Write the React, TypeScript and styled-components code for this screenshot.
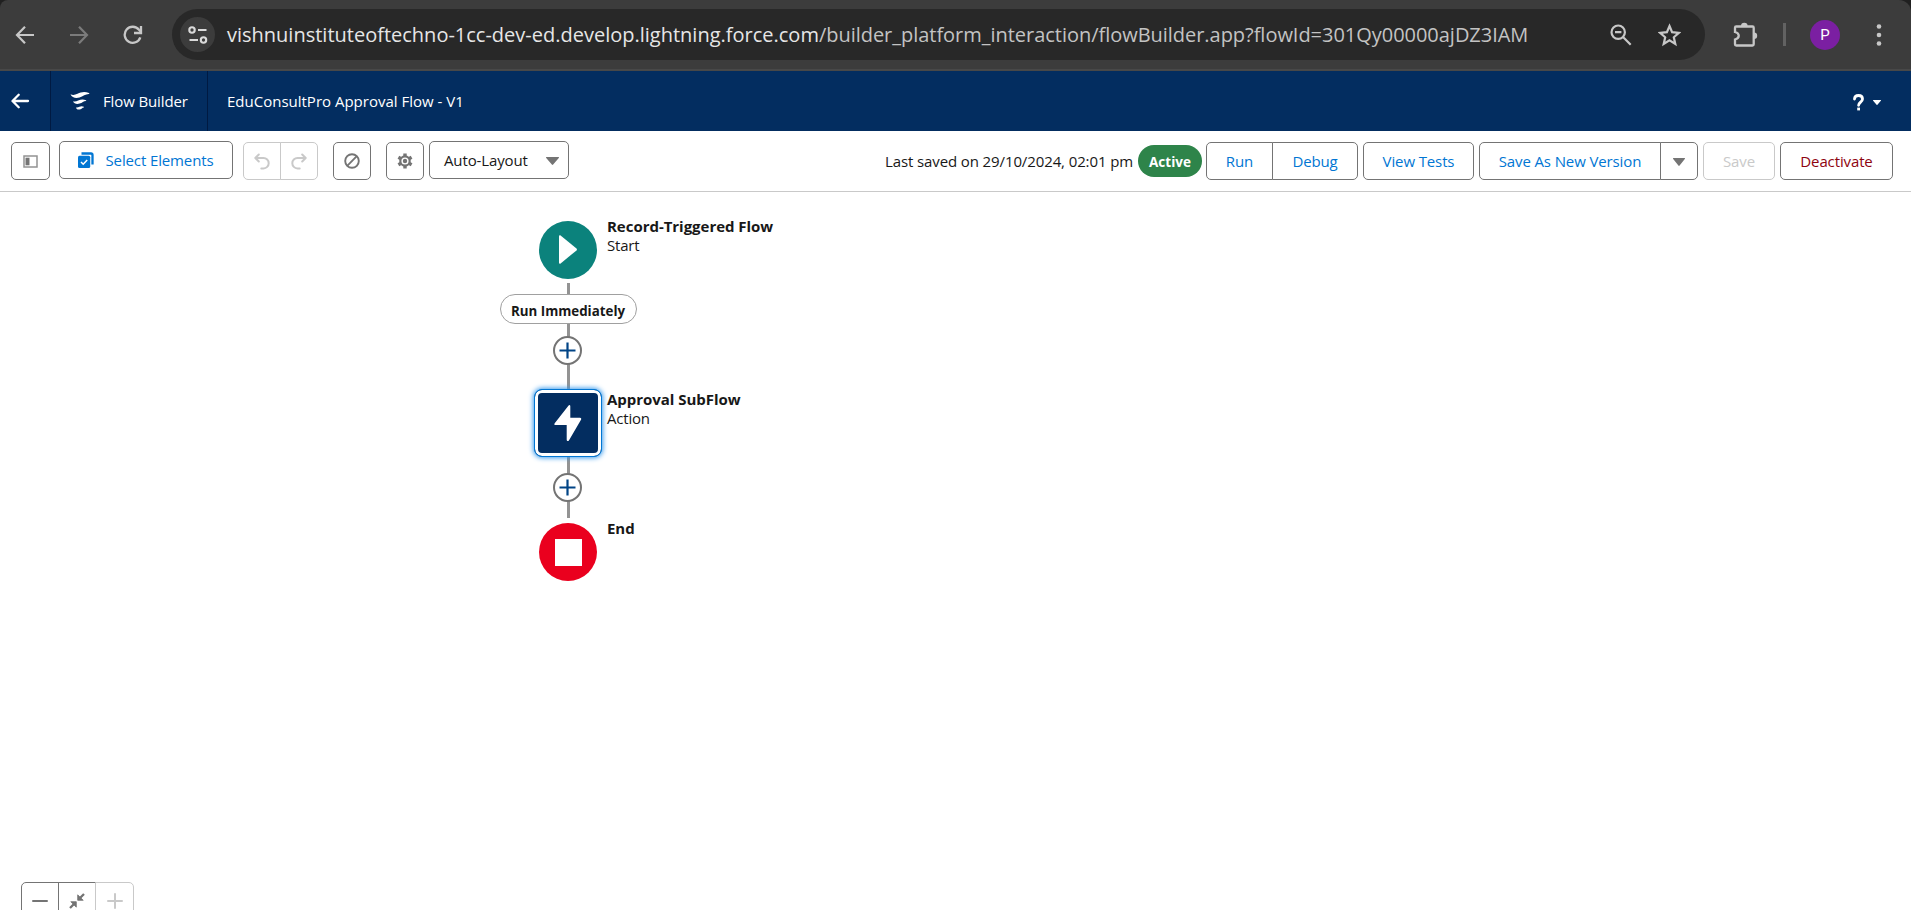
import React from 'react';
import styled, { createGlobalStyle, css } from 'styled-components';

const GlobalStyle = createGlobalStyle`
  * { box-sizing: border-box; }
  html, body { margin: 0; padding: 0; }
  body {
    background: #fff;
    color: #181818;
    font-family: 'Open Sans', 'Noto Sans', sans-serif;
    font-size: 15px;
    letter-spacing: -0.12px;
    overflow: hidden;
  }
  svg { display: block; flex: none; }
`;

const Page = styled.div`
  display: flex;
  flex-direction: column;
  width: 100%;
  height: 100vh;
  overflow: hidden;
`;

/* ---------- Browser bar ---------- */

const BrowserFrame = styled.div`
  flex: none;
  background: #202020;
`;

const BrowserBar = styled.div`
  display: flex;
  align-items: center;
  height: 71px;
  padding: 0 20px 0 15px;
  background: #3c3c3c;
  border-bottom: 2px solid #484848;
  border-radius: 8px 12px 0 0;
  color: #c7c7c7;
`;

const NavIcons = styled.div`
  display: flex;
  gap: 34px;
  width: 157px;
`;

const AddressBar = styled.div`
  display: flex;
  align-items: center;
  width: 1533px;
  height: 51px;
  padding: 0 24px 0 8px;
  border-radius: 26px;
  background: #282828;
`;

const SiteInfo = styled.div`
  display: grid;
  place-items: center;
  width: 35px;
  height: 35px;
  margin-right: 12px;
  border-radius: 50%;
  background: #3c3c3c;
`;

const Url = styled.div`
  flex: 1;
  font-size: 20px;
  letter-spacing: -0.03px;
  line-height: 28px;
  white-space: nowrap;
  color: #c3c3c3;
`;

const Host = styled.span`
  letter-spacing: 0;
  color: #e6e6e6;
`;

const AddressActions = styled.div`
  display: flex;
  align-items: center;
  gap: 26px;
`;

const Extras = styled.div`
  display: flex;
  flex: 1;
  align-items: center;
  padding-left: 28px;
`;

const BrowserDivider = styled.i`
  width: 3px;
  height: 23px;
  margin: 0 24px 0 25px;
  background: #626262;
`;

const Avatar = styled.div`
  display: grid;
  place-items: center;
  width: 30px;
  height: 30px;
  margin-right: 36px;
  border-radius: 50%;
  background: #7b1fa2;
  color: #fff;
  font: 400 15px Roboto, sans-serif;
`;

/* ---------- App header ---------- */

const Header = styled.header`
  display: flex;
  flex: none;
  height: 60px;
  background: #032d60;
  color: #fff;
`;

const HeaderCell = styled.div<{ $width: number; $pad: number }>`
  display: flex;
  align-items: center;
  width: ${(p) => p.$width}px;
  padding: 0 0 0 ${(p) => p.$pad}px;
  border-right: 1px solid #001a42;
`;

const AppName = styled.span`
  margin-left: 13px;
`;

const FlowTitle = styled.h1`
  flex: 1;
  margin: 0;
  padding-left: 19px;
  font-size: 15px;
  font-weight: 400;
  letter-spacing: 0;
  line-height: 61px;
`;

const HelpMenu = styled.div`
  display: flex;
  align-items: center;
  gap: 9px;
  padding: 3px 30px 0 0;
`;

/* ---------- Toolbar ---------- */

const Toolbar = styled.div`
  display: flex;
  flex: none;
  align-items: flex-start;
  justify-content: space-between;
  height: 61px;
  padding: 10px 18px 0 11px;
  border-bottom: 1px solid #c9c9c9;
`;

const ToolbarSide = styled.div`
  display: flex;
`;

const Status = styled.span`
  margin-right: 5px;
  line-height: 40px;
  letter-spacing: -0.11px;
`;

type Tone = 'brand' | 'neutral' | 'disabled' | 'danger';

const tones: Record<Tone, string> = {
  brand: '#0176d3',
  neutral: '#181818',
  disabled: '#c9c9c9',
  danger: '#8e030f',
};

const Button = styled.button<{ $width: number; $tone?: Tone; $gap?: number; $raised?: boolean; $side?: 'left' | 'right' }>`
  display: flex;
  flex: none;
  align-items: center;
  justify-content: center;
  width: ${(p) => p.$width}px;
  height: 38px;
  margin: ${(p) => (p.$raised ? 0 : 1)}px 0 0 ${(p) => p.$gap ?? 0}px;
  padding: 0;
  border: 1px solid ${(p) => (p.$tone === 'disabled' ? '#c9c9c9' : '#747474')};
  border-radius: 5px;
  background: #fff;
  color: ${(p) => tones[p.$tone ?? 'brand']};
  font: inherit;
  letter-spacing: inherit;
  line-height: 36px;
  ${(p) => p.$side === 'left' && css`border-radius: 5px 0 0 5px;`}
  ${(p) => p.$side === 'right' && css`margin-left: -1px; border-radius: 0 5px 5px 0;`}
`;

const ButtonLabel = styled.span`
  margin-left: 11px;
`;

const MenuButton = styled(Button)`
  justify-content: space-between;
  padding: 0 9px 0 14px;
`;

const MenuCaret = styled.span`
  padding-top: 2px;
`;

const ActiveBadge = styled.span`
  width: 64px;
  height: 32px;
  margin: 4px 4px 0 0;
  border-radius: 16px;
  background: #2e844a;
  color: #fff;
  font-size: 13.5px;
  font-weight: 700;
  letter-spacing: 0;
  line-height: 34px;
  text-align: center;
`;

/* ---------- Canvas ---------- */

const Canvas = styled.main`
  position: relative;
  flex: 1;
  overflow: hidden;
`;

const Connector = styled.i<{ $y: number; $h: number }>`
  position: absolute;
  left: 567px;
  top: ${(p) => p.$y}px;
  width: 3px;
  height: ${(p) => p.$h}px;
  background: #939393;
`;

const Node = styled.div<{ $y: number }>`
  position: absolute;
  left: 533px;
  top: ${(p) => p.$y}px;
  display: flex;
  align-items: flex-start;
`;

const IconSlot = styled.div`
  display: flex;
  justify-content: center;
  width: 70px;
`;

const RoundIcon = styled.div<{ $color: string }>`
  display: grid;
  place-items: center;
  width: 58px;
  height: 58px;
  border-radius: 50%;
  background: ${(p) => p.$color};
`;

const ActionIcon = styled.div`
  display: grid;
  place-items: center;
  width: 68px;
  height: 68px;
  border: 1px solid #0176d3;
  border-radius: 8px;
  background: #032d60;
  box-shadow: inset 0 0 0 3px #fff, 0 0 5px 1px #3b9bec;
`;

const StopSquare = styled.i`
  width: 27px;
  height: 27px;
  background: #fff;
`;

const NodeText = styled.div<{ $top: number }>`
  margin: ${(p) => p.$top}px 0 0 4px;
  line-height: 19px;
  white-space: nowrap;
`;

const NodeTitle = styled.div`
  font-weight: 700;
  letter-spacing: -0.03px;
`;

const NodeKind = styled.div`
  letter-spacing: -0.2px;
`;

const PathLabel = styled.div`
  position: absolute;
  left: 499.5px;
  top: 102px;
  width: 137px;
  height: 30px;
  border: 1px solid #a0a0a0;
  border-radius: 15px;
  background: #fff;
  font-size: 13.33px;
  font-weight: 700;
  letter-spacing: 0;
  line-height: 33px;
  text-align: center;
`;

const AddButton = styled.button<{ $y: number }>`
  position: absolute;
  left: 553px;
  top: ${(p) => p.$y}px;
  display: grid;
  place-items: center;
  width: 29px;
  height: 29px;
  padding: 0;
  border: 2px solid #747474;
  border-radius: 50%;
  background: #fff;
`;

const ZoomControls = styled.div`
  position: absolute;
  left: 21px;
  top: 690px;
  display: flex;
`;

const ZoomButton = styled(Button)`
  margin-top: 0;
  border-radius: 0;
  &:first-child { border-top-left-radius: 5px; }
  &:not(:first-child) { margin-left: -1px; }
  &:last-child { border-top-right-radius: 5px; }
`;

/* ---------- Icons ---------- */

const Caret = ({ w, h, fill = '#747474' }: { w: number; h: number; fill?: string }) => (
  <svg width={w} height={h} viewBox="0 0 12 8" preserveAspectRatio="none" fill={fill}>
    <path d="M.6 0h10.8c.6 0 .8.5.4 1L6.6 7.6a.8.8 0 0 1-1.2 0L.2 1C-.2.500 0 0 .6 0Z" />
  </svg>
);

const Arrow = ({ color, flip }: { color: string; flip?: boolean }) => (
  <svg width="20" height="20" viewBox="0 0 20 20" fill="none" stroke={color} strokeWidth="2.2">
    <path d={flip ? 'M1 10h16.500M10 1.800l8 8.200-8 8.200' : 'M19 10H2.500M10 1.800L2 10l8 8.200'} />
  </svg>
);

const ReloadIcon = () => (
  <svg width="20" height="20" viewBox="0 0 20 20" fill="none" stroke="#c7c7c7" strokeWidth="2.300">
    <path d="M17.300 12.300A8 8 0 1 1 16 4.800L18 7" />
    <path d="M18 1v7h-7" />
  </svg>
);

const TuneIcon = () => (
  <svg width="20" height="18" viewBox="0 0 20 18" fill="none" stroke="#dadada" strokeWidth="2.100">
    <circle cx="4" cy="4" r="2.700" />
    <path d="M10 4h8.500M1.500 14H10" />
    <circle cx="15.500" cy="14" r="2.700" />
  </svg>
);

const ZoomOutIcon = () => (
  <svg width="22" height="22" viewBox="0 0 22 22" fill="none" stroke="#c7c7c7" strokeWidth="2.200">
    <circle cx="8.200" cy="8.200" r="6.700" />
    <path d="M13 13l7.700 7.700M5 8.200h6.400" />
  </svg>
);

const StarIcon = () => (
  <svg width="23" height="24" viewBox="0 0 23 24" fill="none" stroke="#c7c7c7" strokeWidth="2.200">
    <path d="M11.500 3l2.600 6.200 6.800.6-5.100 4.500 1.500 6.600-5.800-3.500-5.800 3.500 1.500-6.600L2.100 9.800l6.800-.6z" />
  </svg>
);

const PuzzleIcon = () => (
  <svg width="25" height="25" viewBox="0 0 25 25">
    <path
      d="M3.200 4.500h16.300c.7 0 1.200.5 1.200 1.200v16.600c0 .7-.5 1.200-1.200 1.200H3.200c-.7 0-1.200-.5-1.200-1.200v-4.800c5-1.300 5-6.200 0-7.500V5.700c0-.7.500-1.200 1.200-1.200Z"
      fill="none"
      stroke="#c7c7c7"
      strokeWidth="2.300"
    />
    <path d="M8 4a3.300 3.300 0 0 1 6.600 0ZM21 10.600a3.200 3.200 0 0 1 0 6.400Z" fill="#c7c7c7" />
  </svg>
);

const MenuDots = () => (
  <svg width="6" height="22" viewBox="0 0 6 22" fill="#c7c7c7">
    <circle cx="3" cy="2.500" r="2.300" />
    <circle cx="3" cy="11" r="2.300" />
    <circle cx="3" cy="19.500" r="2.300" />
  </svg>
);

const BackIcon = () => (
  <svg width="19" height="16" viewBox="0 0 19 16" fill="none" stroke="#fff" strokeWidth="2.300" strokeLinecap="round" strokeLinejoin="round">
    <path d="M17 8H2M7.700 1.800L1.500 8l6.200 6.200" />
  </svg>
);

const FlowIcon = () => (
  <svg width="20" height="20" viewBox="0 0 20 20" fill="#fff">
    <path d="M.5 3.200C2.800 4.600 5 4 7.500 2.800c3.500-1.700 7-2.600 11.500-.8.600.3.500.9-.1.900-3.400-.1-5.700 2.400-9.400 3.600C5.800 7.500 2 6.800.5 3.200Z" />
    <path d="M3 10.200c1.700.8 3.400.1 5.200-.7 2.600-1.200 5-1.600 7.800-.3.500.2.400.7-.1.700-2.300.1-3.700 1.900-6.300 2.700-2.800.8-5.600.2-6.600-2.400Z" />
    <path d="M6 16.400c1.300.4 2.200-.1 3.400-.6 1.600-.7 2.900-.8 4.400 0 .4.200.3.500-.1.600-1.400.2-2.100 1.500-3.700 2-1.800.5-3.500 0-4-2Z" />
  </svg>
);

const HelpIcon = () => (
  <svg width="11" height="17" viewBox="0 0 11 17" fill="none" stroke="#fff" strokeWidth="2.800">
    <path d="M1.500 5C1.600 2.800 3.200 1.500 5.500 1.500s4 1.400 4 3.500c0 3-3.900 3.200-3.900 6.300" strokeLinecap="round" />
    <path d="M4.200 15h2.800" />
  </svg>
);

const PanelIcon = () => (
  <svg width="15" height="13" viewBox="0 0 15 13">
    <path d="M1 1h13v11H1z" fill="#fff" stroke="#939393" strokeWidth="1.500" />
    <path d="M2.500 2.700h4v7.600h-4z" fill="#747474" />
  </svg>
);

const SelectIcon = () => (
  <svg width="16" height="16" viewBox="0 0 16 16" fill="none">
    <path d="M3.500 1.500H13c.8 0 1.500.7 1.500 1.500v9.500" stroke="#0176d3" strokeWidth="2.300" />
    <rect x="0" y="3.800" width="12.200" height="12.200" rx="1.500" fill="#0176d3" />
    <path d="M3 10l2.200 2.200 4-4.300" stroke="#fff" strokeWidth="1.500" />
  </svg>
);

const UndoIcon = ({ flip }: { flip?: boolean }) => (
  <svg width="16" height="17" viewBox="0 0 16 17" fill="none" stroke="#c9c9c9" strokeWidth="2" strokeLinecap="round" strokeLinejoin="round">
    <g transform={flip ? 'matrix(-1 0 0 1 16 0)' : undefined}>
      <path d="M4.800 1.500L1.300 5l3.500 3.500M1.800 5h7.700a5.200 5.200 0 0 1 0 10.400H7.300" />
    </g>
  </svg>
);

const BlockIcon = () => (
  <svg width="16" height="16" viewBox="0 0 16 16" fill="none" stroke="#747474" strokeWidth="1.900">
    <circle cx="8" cy="8" r="6.800" />
    <path d="M3.200 12.800l9.600-9.600" />
  </svg>
);

const GearIcon = () => (
  <svg width="16" height="16" viewBox="0 0 16 16" fill="none" stroke="#747474">
    <g strokeWidth="3.400">
      <path d="M8 .4v3M8 12.600v3M1.400 4.200l2.700 1.500M11.900 10.300l2.700 1.500M1.400 11.800l2.700-1.500M11.900 5.700l2.700-1.500" />
    </g>
    <circle cx="8" cy="8" r="4.700" strokeWidth="2.200" />
    <circle cx="8" cy="8" r="2.200" fill="#747474" stroke="none" />
  </svg>
);

const PlayIcon = () => (
  <svg width="18" height="29" viewBox="0 0 18 29" fill="#fff">
    <path d="M0 1.200C0 .3.900.1 1.600.6l15.900 13c.6.500.6 1.300 0 1.800L1.600 28.400C.9 28.900 0 28.700 0 27.800Z" />
  </svg>
);

const BoltIcon = () => (
  <svg width="28" height="38" viewBox="0 0 28 38" fill="#fff">
    <path d="M14.600 1.600L.7 19.200c-.7.900-.4 1.900.8 1.900h11.200v14.600c0 1.500 1.400 1.900 2.200.7L27 15.700c.6-1 .2-2-1-2H16.300V2.200c0-1.300-1-1.500-1.700-.6Z" />
  </svg>
);

const PlusIcon = () => (
  <svg width="17" height="17" viewBox="0 0 17 17" stroke="#014486" strokeWidth="2.200">
    <path d="M8.500.5v16M.5 8.500h16" />
  </svg>
);

const ZoomGlyph = ({ d, color }: { d: string; color: string }) => (
  <svg width="16" height="16" viewBox="0 0 16 16" stroke={color} strokeWidth="2" strokeLinecap="round">
    <path d={d} />
  </svg>
);

const FitIcon = () => (
  <svg width="16" height="16" viewBox="0 0 16 16" fill="#747474" stroke="#747474">
    <path d="M8.700 1.800v5.500h5.500zM1.800 8.700h5.500v5.500z" strokeWidth=".8" strokeLinejoin="round" />
    <path d="M10 6l5-5M6 10l-5 5" strokeWidth="2.300" />
  </svg>
);

export default function App() {
  return (
    <Page>
      <GlobalStyle />
      <BrowserFrame>
        <BrowserBar>
          <NavIcons>
            <Arrow color="#c7c7c7" />
            <Arrow color="#7b7b7b" flip />
            <ReloadIcon />
          </NavIcons>
          <AddressBar>
            <SiteInfo><TuneIcon /></SiteInfo>
            <Url>
              <Host>vishnuinstituteoftechno-1cc-dev-ed.develop.lightning.force.com</Host>
              /builder_platform_interaction/flowBuilder.app?flowId=301Qy00000ajDZ3IAM
            </Url>
            <AddressActions>
              <ZoomOutIcon />
              <StarIcon />
            </AddressActions>
          </AddressBar>
          <Extras>
            <PuzzleIcon />
            <BrowserDivider />
            <Avatar>P</Avatar>
            <MenuDots />
          </Extras>
        </BrowserBar>
      </BrowserFrame>

      <Header>
        <HeaderCell $width={51} $pad={11}><BackIcon /></HeaderCell>
        <HeaderCell $width={157} $pad={19}>
          <FlowIcon />
          <AppName>Flow Builder</AppName>
        </HeaderCell>
        <FlowTitle>EduConsultPro Approval Flow - V1</FlowTitle>
        <HelpMenu>
          <HelpIcon />
          <Caret w={8} h={5} fill="#fff" />
        </HelpMenu>
      </Header>

      <Toolbar>
        <ToolbarSide>
          <Button $width={39}><PanelIcon /></Button>
          <Button $width={174} $gap={9} $raised>
            <SelectIcon />
            <ButtonLabel>Select Elements</ButtonLabel>
          </Button>
          <Button $width={38} $gap={10} $tone="disabled" $side="left"><UndoIcon /></Button>
          <Button $width={38} $tone="disabled" $side="right"><UndoIcon flip /></Button>
          <Button $width={38} $gap={15}><BlockIcon /></Button>
          <Button $width={38} $gap={15}><GearIcon /></Button>
          <MenuButton $width={140} $gap={5} $tone="neutral" $raised>
            Auto-Layout
            <MenuCaret><Caret w={13} h={8} /></MenuCaret>
          </MenuButton>
        </ToolbarSide>
        <ToolbarSide>
          <Status>Last saved on 29/10/2024, 02:01 pm</Status>
          <ActiveBadge>Active</ActiveBadge>
          <Button $width={67} $side="left">Run</Button>
          <Button $width={86} $side="right">Debug</Button>
          <Button $width={111} $gap={5}>View Tests</Button>
          <Button $width={182} $gap={5} $side="left">Save As New Version</Button>
          <Button $width={38} $side="right"><MenuCaret><Caret w={12} h={8} /></MenuCaret></Button>
          <Button $width={72} $gap={5} $tone="disabled">Save</Button>
          <Button $width={113} $gap={5} $tone="danger">Deactivate</Button>
        </ToolbarSide>
      </Toolbar>

      <Canvas>
        <Connector $y={91} $h={107} />
        <Connector $y={265} $h={61} />
        <Node $y={28.5}>
          <IconSlot><RoundIcon $color="#0b827c"><PlayIcon /></RoundIcon></IconSlot>
          <NodeText $top={-4}>
            <NodeTitle>Record-Triggered Flow</NodeTitle>
            <NodeKind>Start</NodeKind>
          </NodeText>
        </Node>
        <PathLabel>Run Immediately</PathLabel>
        <AddButton $y={144}><PlusIcon /></AddButton>
        <Node $y={197}>
          <IconSlot><ActionIcon><BoltIcon /></ActionIcon></IconSlot>
          <NodeText $top={1}>
            <NodeTitle>Approval SubFlow</NodeTitle>
            <NodeKind>Action</NodeKind>
          </NodeText>
        </Node>
        <AddButton $y={281}><PlusIcon /></AddButton>
        <Node $y={331}>
          <IconSlot><RoundIcon $color="#ea001e"><StopSquare /></RoundIcon></IconSlot>
          <NodeText $top={-4}>
            <NodeTitle>End</NodeTitle>
          </NodeText>
        </Node>
        <ZoomControls>
          <ZoomButton $width={38}><ZoomGlyph d="M1 8h14" color="#747474" /></ZoomButton>
          <ZoomButton $width={38}><FitIcon /></ZoomButton>
          <ZoomButton $width={39} $tone="disabled"><ZoomGlyph d="M1 8h14M8 1v14" color="#c9c9c9" /></ZoomButton>
        </ZoomControls>
      </Canvas>
    </Page>
  );
}
